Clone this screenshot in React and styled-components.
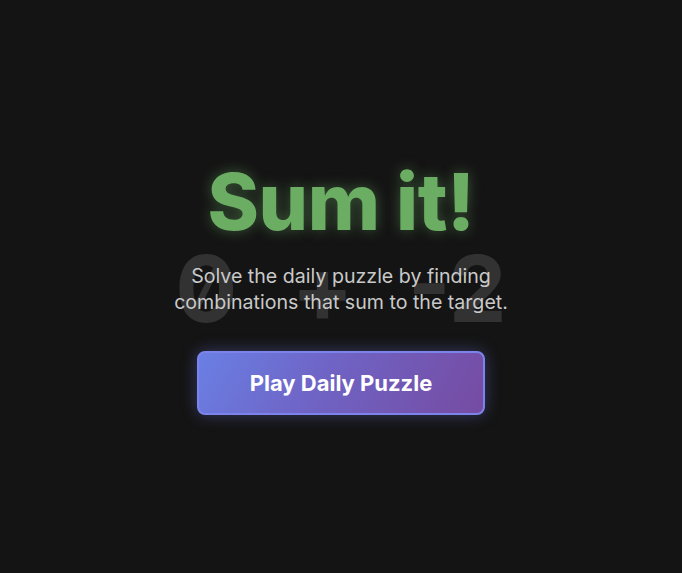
import React from "react";
import styled, { createGlobalStyle } from "styled-components";

const GlobalStyle = createGlobalStyle`
  html, body {
    margin: 0;
    padding: 0;
    background: #141414;
  }
  body {
    font-family: Inter, "Noto Sans", "Liberation Sans", sans-serif;
    color: #e6e6e6;
  }
`;

const Page = styled.main`
  min-height: 573px;
  display: flex;
  align-items: center;
  justify-content: center;
  background: #141414;
`;

const Hero = styled.section`
  display: flex;
  flex-direction: column;
  align-items: center;
  text-align: center;
  margin-top: 4px;
`;

const Title = styled.h1`
  margin: 0;
  font-size: 78px;
  font-weight: 800;
  line-height: 1;
  letter-spacing: -0.5px;
  color: #6aad63;
  text-shadow: 0 0 14px rgba(106, 173, 99, 0.45);
`;

const Blurb = styled.div`
  position: relative;
  margin-top: 22px;
`;

const Equation = styled.div`
  position: absolute;
  inset: 0;
  display: flex;
  align-items: center;
  justify-content: center;
  gap: 54px;
  font-size: 92px;
  font-weight: 700;
  line-height: 1;
  color: #323232;
  user-select: none;
  pointer-events: none;
  z-index: 0;
  font-feature-settings: "zero" 1;
`;

const Token = styled.span`
  display: block;
`;

const Subtitle = styled.p`
  position: relative;
  z-index: 1;
  margin: 0;
  font-size: 19.6px;
  line-height: 26px;
  font-weight: 400;
  color: #c9c9c9;
`;

const PlayButton = styled.button`
  margin-top: 36px;
  width: 288px;
  height: 64px;
  border: 2px solid #7c84ec;
  border-radius: 8px;
  background: linear-gradient(120deg, #6a7fe4 0%, #6f63c4 45%, #764ba2 100%);
  color: #ffffff;
  font-family: inherit;
  font-size: 22px;
  font-weight: 700;
  cursor: pointer;
  box-shadow: 0 0 16px rgba(110, 120, 235, 0.38);
`;

export default function App() {
  return (
    <>
      <GlobalStyle />
      <Page>
        <Hero>
          <Title>Sum it!</Title>
          <Blurb>
            <Equation aria-hidden="true">
              <Token>0</Token>
              <Token>+</Token>
              <Token>-2</Token>
            </Equation>
            <Subtitle>
              Solve the daily puzzle by finding
              <br />
              combinations that sum to the target.
            </Subtitle>
          </Blurb>
          <PlayButton>Play Daily Puzzle</PlayButton>
        </Hero>
      </Page>
    </>
  );
}
